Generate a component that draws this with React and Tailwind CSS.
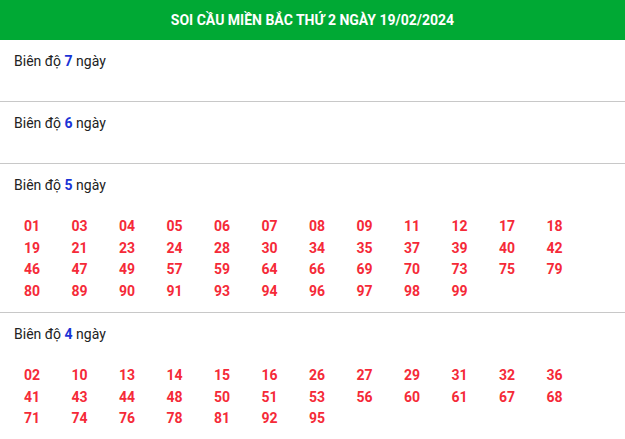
const sections = [
  { days: 7, nums: [] },
  { days: 6, nums: [] },
  {
    days: 5,
    nums: ['01', '03', '04', '05', '06', '07', '08', '09', '11', '12', '17', '18', '19', '21', '23', '24', '28', '30', '34', '35', '37', '39', '40', '42', '46', '47', '49', '57', '59', '64', '66', '69', '70', '73', '75', '79', '80', '89', '90', '91', '93', '94', '96', '97', '98', '99'],
  },
  {
    days: 4,
    nums: ['02', '10', '13', '14', '15', '16', '26', '27', '29', '31', '32', '36', '41', '43', '44', '48', '50', '51', '53', '56', '60', '61', '67', '68', '71', '74', '76', '78', '81', '92', '95'],
  },
];

export default function App() {
  return (
    <div className="w-[625px] bg-white font-['Roboto',sans-serif]">
      <div className="h-10 bg-[#00a934] flex items-center justify-center">
        <h1 className="text-white font-bold text-[14px]">SOI CẦU MIỀN BẮC THỨ 2 NGÀY 19/02/2024</h1>
      </div>

      {sections.map((s, i) => (
        <div key={s.days} className={`px-[14px] pt-[11px] ${s.nums.length ? 'pb-[10px]' : 'pb-[30px]'} ${i < sections.length - 1 ? 'border-b border-[#c8c8c8]' : ''}`}>
          <p className="text-[14px] leading-[20px] text-[#222]">
            Biên độ <span className="font-bold text-[#1a33d6]">{s.days}</span> ngày
          </p>
          {s.nums.length > 0 && (
            <div className="grid grid-cols-[repeat(12,47.5px)] mt-[21px]">
              {s.nums.map((n) => (
                <span key={n} className="pl-[10px] text-[14px] font-bold leading-[21.5px] text-[#f52a38]">
                  {n}
                </span>
              ))}
            </div>
          )}
        </div>
      ))}
    </div>
  );
}
